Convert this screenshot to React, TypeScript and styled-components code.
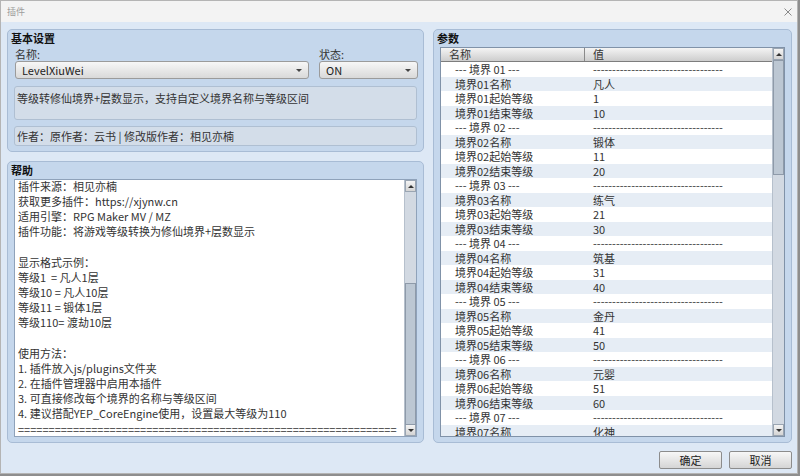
import React from "react";
import styled, { createGlobalStyle } from "styled-components";

const GlobalStyle = createGlobalStyle`
  html, body {
    margin: 0;
    padding: 0;
    background: #8e8e8e;
  }
  body {
    font-family: "Noto Sans CJK SC", "Noto Sans", sans-serif;
    font-size: 11px;
    color: #333;
  }
`;

// window frame
const Window = styled.div`
  width: 798px;
  height: 474px;
  box-sizing: border-box;
  border: 1px solid #b4b4b4;
  background: #dde8f5;
  display: flex;
  flex-direction: column;
  overflow: hidden;
`;

const TitleBar = styled.div`
  height: 21px;
  flex: none;
  background: #f3f3f3;
  display: flex;
  align-items: center;
  justify-content: space-between;
  padding: 0 5px 0 6px;
  font-size: 9px;
  color: #9c9c9c;
`;

const CloseIcon = styled.svg`
  width: 8px;
  height: 8px;
`;

const Main = styled.div`
  flex: 1;
  display: flex;
  gap: 9px;
  padding: 7px 5px 0 6px;
  min-height: 0;
`;

const LeftColumn = styled.div`
  width: 417px;
  display: flex;
  flex-direction: column;
  gap: 9px;
`;

// panel style
const Panel = styled.div<{ $height: number; $width?: number }>`
  box-sizing: border-box;
  height: ${(p) => p.$height}px;
  width: ${(p) => (p.$width ? `${p.$width}px` : "auto")};
  background: #c5d7ec;
  border: 1px solid #a8bcd5;
  border-radius: 5px;
  padding: 1px 6px 5px 6px;
  display: flex;
  flex-direction: column;
`;

const PanelTitle = styled.div`
  font-weight: bold;
  color: #111;
  line-height: 14px;
  height: 14px;
  margin-left: -3px;
  margin-bottom: 2px;
`;

const FieldGrid = styled.div`
  display: grid;
  grid-template-columns: 294px 99px;
  column-gap: 10px;
  margin-left: 1px;
`;

const Label = styled.div`
  line-height: 14px;
  height: 14px;
  color: #333;
`;

const Select = styled.div`
  height: 18px;
  box-sizing: border-box;
  border: 1px solid #9b9b9b;
  border-radius: 3px;
  background: linear-gradient(#f7f7f7, #d9d9d9);
  display: flex;
  align-items: center;
  justify-content: space-between;
  padding: 0 6px;
  color: #222;
`;

const Arrow = styled.span`
  width: 0;
  height: 0;
  border-left: 3px solid transparent;
  border-right: 3px solid transparent;
  border-top: 3px solid #444;
`;

const InfoBox = styled.div<{ $height: number; $gap: number }>`
  box-sizing: border-box;
  height: ${(p) => p.$height}px;
  margin-top: ${(p) => p.$gap}px;
  background: #d3dde9;
  border: 1px solid #afbfd2;
  border-radius: 3px;
  padding: ${(p) => (p.$height > 24 ? "4px" : "2px")} 2px 0;
  line-height: 14px;
  color: #333;
`;

// text area with scroll bar
const TextArea = styled.div`
  flex: 1;
  display: flex;
  background: #fff;
  border: 1px solid #8fa2ba;
  min-height: 0;
  overflow: hidden;
`;

const HelpText = styled.div`
  flex: 1;
  padding: 0 3px;
  margin-top: -1px;
  white-space: pre;
  line-height: 15.15px;
  color: #333;
  overflow: hidden;
`;

const ScrollBar = styled.div`
  width: 11px;
  flex: none;
  display: flex;
  flex-direction: column;
  background: #d2d9e2;
  border-left: 1px solid #b6c0cc;
`;

const ScrollButton = styled.div<{ $up?: boolean }>`
  height: 12px;
  flex: none;
  box-sizing: border-box;
  border: 1px solid #9aa5b2;
  background: linear-gradient(#f4f4f4, #d4d4d4);
  display: flex;
  align-items: center;
  justify-content: center;
  &::after {
    content: "";
    border-left: 3px solid transparent;
    border-right: 3px solid transparent;
    ${(p) =>
      p.$up ? "border-bottom: 3px solid #333;" : "border-top: 3px solid #333;"}
  }
`;

const Track = styled.div`
  flex: 1;
  position: relative;
`;

const Thumb = styled.div<{ $top: number; $height: number }>`
  position: absolute;
  left: 0;
  right: 0;
  top: ${(p) => p.$top}px;
  height: ${(p) => p.$height}px;
  box-sizing: border-box;
  border: 1px solid #8e9aa9;
  background: #bcc7d3;
`;

// parameter table
const TableWrap = styled.div`
  flex: 1;
  display: flex;
  border: 1px solid #8092a8;
  background: #fff;
  min-height: 0;
  overflow: hidden;
`;

const Table = styled.div`
  flex: 1;
  display: flex;
  flex-direction: column;
  min-width: 0;
`;

const HeaderRow = styled.div`
  display: grid;
  grid-template-columns: 144px 1fr;
  height: 14px;
  flex: none;
  box-sizing: border-box;
  background: linear-gradient(#f4f4f4, #cdcdcd);
  border-bottom: 1px solid #7d7d7d;
  line-height: 13px;
`;

const HeaderCell = styled.div<{ $divider?: boolean }>`
  padding-left: 8px;
  color: #333;
  border-right: ${(p) => (p.$divider ? "1px solid #8a8a8a" : "none")};
`;

const Rows = styled.div`
  flex: 1;
  overflow: hidden;
`;

const Row = styled.div<{ $alt: boolean }>`
  display: grid;
  grid-template-columns: 144px 1fr;
  height: 14.5px;
  line-height: 14.5px;
  background: ${(p) => (p.$alt ? "#e6edf5" : "#ffffff")};
  color: #333;
  white-space: pre;
`;

const NameCell = styled.div`
  padding-left: 14px;
`;

const ValueCell = styled.div`
  padding-left: 8px;
  overflow: hidden;
`;

const Footer = styled.div`
  height: 30px;
  flex: none;
  display: flex;
  justify-content: flex-end;
  align-items: flex-start;
  gap: 7px;
  padding: 8px 5px 0 0;
  box-sizing: border-box;
`;

const Button = styled.button`
  width: 63px;
  height: 18px;
  border: 1px solid #8c8c8c;
  border-radius: 2px;
  background: linear-gradient(#f7f7f7, #d5d5d5);
  font-family: inherit;
  font-size: 11px;
  color: #222;
  padding: 0;
  line-height: 16px;
`;

const realms = ["凡人", "锻体", "练气", "筑基", "金丹", "元婴", "化神"];
const dashes = "-".repeat(34);

type ParamRow = { name: string; value: string };

const rows: ParamRow[] = realms.flatMap((realm, i) => {
  const n = String(i + 1).padStart(2, "0");
  return [
    { name: `--- 境界 ${n} ---`, value: dashes },
    { name: `境界${n}名称`, value: realm },
    { name: `境界${n}起始等级`, value: String(i * 10 + 1) },
    { name: `境界${n}结束等级`, value: String((i + 1) * 10) },
  ];
});

const helpText = [
  "插件来源：相见亦楠",
  "获取更多插件：https://xjynw.cn",
  "适用引擎：RPG Maker MV / MZ",
  "插件功能：将游戏等级转换为修仙境界+层数显示",
  "",
  "显示格式示例：",
  "等级1  = 凡人1层",
  "等级10 = 凡人10层",
  "等级11 = 锻体1层",
  "等级110= 渡劫10层",
  "",
  "使用方法：",
  "1. 插件放入js/plugins文件夹",
  "2. 在插件管理器中启用本插件",
  "3. 可直接修改每个境界的名称与等级区间",
  "4. 建议搭配YEP_CoreEngine使用，设置最大等级为110",
  "=".repeat(62),
].join("\n");

const App: React.FC = () => {
  return (
    <>
      <GlobalStyle />
      <Window>
        <TitleBar>
          <span>插件</span>
          <CloseIcon viewBox="0 0 8 8">
            <path d="M0.5 0.5 L7.5 7.5 M7.5 0.5 L0.5 7.5" stroke="#8a8a8a" strokeWidth="1" />
          </CloseIcon>
        </TitleBar>
        <Main>
          <LeftColumn>
            <Panel $height={123}>
              <PanelTitle>基本设置</PanelTitle>
              <FieldGrid>
                <Label>名称:</Label>
                <Label>状态:</Label>
                <Select>
                  LevelXiuWei
                  <Arrow />
                </Select>
                <Select>
                  ON
                  <Arrow />
                </Select>
              </FieldGrid>
              <InfoBox $height={34} $gap={7}>
                等级转修仙境界+层数显示，支持自定义境界名称与等级区间
              </InfoBox>
              <InfoBox $height={20} $gap={6}>
                作者：原作者：云书 | 修改版作者：相见亦楠
              </InfoBox>
            </Panel>
            <Panel $height={282}>
              <PanelTitle>帮助</PanelTitle>
              <TextArea>
                <HelpText>{helpText}</HelpText>
                <ScrollBar>
                  <ScrollButton $up />
                  <Track>
                    <Thumb $top={91} $height={142} />
                  </Track>
                  <ScrollButton />
                </ScrollBar>
              </TextArea>
            </Panel>
          </LeftColumn>
          <Panel $height={414} $width={359}>
            <PanelTitle>参数</PanelTitle>
            <TableWrap>
              <Table>
                <HeaderRow>
                  <HeaderCell $divider>名称</HeaderCell>
                  <HeaderCell>值</HeaderCell>
                </HeaderRow>
                <Rows>
                  {rows.map((r, i) => (
                    <Row key={i} $alt={i % 2 === 1}>
                      <NameCell>{r.name}</NameCell>
                      <ValueCell>{r.value}</ValueCell>
                    </Row>
                  ))}
                </Rows>
              </Table>
              <ScrollBar>
                <ScrollButton $up />
                <Track>
                  <Thumb $top={0} $height={115} />
                </Track>
                <ScrollButton />
              </ScrollBar>
            </TableWrap>
          </Panel>
        </Main>
        <Footer>
          <Button>确定</Button>
          <Button>取消</Button>
        </Footer>
      </Window>
    </>
  );
};

export default App;
